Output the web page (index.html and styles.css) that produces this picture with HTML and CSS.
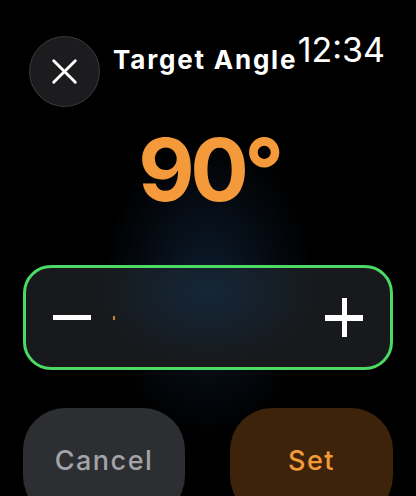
FILE: index.html
```html
<!DOCTYPE html>
<html>
<head>
<meta charset="utf-8">
<link rel="stylesheet" href="styles.css">
</head>
<body>
<div class="screen">
  <header class="top">
    <button class="close" aria-label="Close">
      <svg width="30" height="30" viewBox="0 0 30 30"><path d="M3 3 L27 27 M27 3 L3 27" stroke="#fff" stroke-width="3.2" stroke-linecap="round" fill="none"/></svg>
    </button>
    <h1 class="title">Target Angle</h1>
    <span class="time">12:34</span>
  </header>
  <div class="value">90°</div>
  <div class="stepper">
    <span class="minus"></span>
    <span class="tick"></span>
    <span class="plus"></span>
  </div>
  <div class="actions">
    <button class="btn cancel">Cancel</button>
    <button class="btn set">Set</button>
  </div>
</div>
</body>
</html>
```
FILE: styles.css
```css
html, body {
  margin: 0;
  padding: 0;
  background: #000;
}
.screen {
  position: relative;
  width: 416px;
  height: 496px;
  overflow: hidden;
  box-sizing: border-box;
  padding: 36px 23px 0 23px;
  font-family: Inter, "Liberation Sans", sans-serif;
  color: #fff;
  background:
    radial-gradient(ellipse 105px 150px at 208px 285px, rgba(14,32,52,0.85) 0%, rgba(9,20,33,0.6) 55%, rgba(0,0,0,0) 100%),
    #000;
  display: flex;
  flex-direction: column;
}
.screen > * {
  flex-shrink: 0;
}
.top {
  display: flex;
  align-items: flex-start;
  height: 71px;
}
.close {
  width: 71px;
  height: 71px;
  margin-left: 6px;
  border-radius: 50%;
  border: 1.5px solid #3a3a3c;
  background: #1c1c1e;
  display: flex;
  align-items: center;
  justify-content: center;
  padding: 0;
  box-sizing: border-box;
  flex-shrink: 0;
}
.close svg {
  width: 27px;
  height: 27px;
}
.title {
  margin: 9px 0 0 13px;
  font-size: 26px;
  font-weight: 700;
  letter-spacing: 1.8px;
  line-height: 30px;
  white-space: nowrap;
}
.time {
  position: absolute;
  top: 32px;
  right: 31px;
  font-size: 34px;
  font-weight: 400;
  line-height: 36px;
  letter-spacing: 0;
}
.value {
  margin-top: 19px;
  text-align: center;
  font-size: 87px;
  font-weight: 700;
  line-height: 88px;
  color: #f59a3a;
  letter-spacing: -4.5px;
  padding-left: 2px;
}
.stepper {
  margin-top: 51px;
  height: 105px;
  box-sizing: border-box;
  border: 3px solid #4cd964;
  border-radius: 28px;
  background:
    radial-gradient(ellipse 110px 70px at 50% 25%, rgba(18,44,68,0.7) 0%, rgba(18,44,68,0) 100%),
    #17191c;
  display: flex;
  align-items: center;
  padding: 0 27px;
}
.minus {
  width: 38px;
  height: 5px;
  background: #fff;
}
.tick {
  width: 2px;
  height: 4px;
  margin-left: 22px;
  background: #c9822e;
}
.plus {
  margin-left: auto;
  width: 38px;
  height: 39px;
  background:
    linear-gradient(#fff, #fff) center / 38px 6px no-repeat,
    linear-gradient(#fff, #fff) center / 5px 39px no-repeat;
}
.actions {
  margin-top: 38px;
  display: flex;
  justify-content: space-between;
}
.btn {
  height: 110px;
  border: none;
  border-radius: 42px;
  font-family: Inter, "Liberation Sans", sans-serif;
  font-size: 27px;
  font-weight: 500;
  letter-spacing: 1.5px;
  line-height: 30px;
  padding: 38px 0 0 0;
  box-sizing: border-box;
  display: flex;
  justify-content: center;
  align-items: flex-start;
}
.cancel {
  width: 162px;
  background: #2c2e32;
  color: #a3a3a8;
}
.set {
  width: 163px;
  background: #3c2309;
  color: #f59a3a;
}
```
